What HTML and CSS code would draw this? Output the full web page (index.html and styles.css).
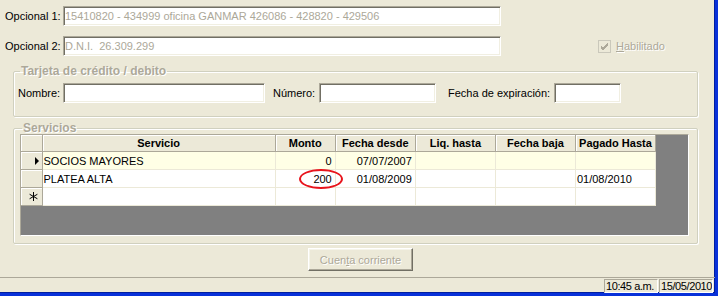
FILE: index.html
```html
<!DOCTYPE html>
<html lang="es">
<head>
    <meta charset="UTF-8">
    <title>Socio - Servicios</title>
    <link rel="stylesheet" href="styles.css">
</head>
<body>

<div class="window">
    <div class="client">

        <div class="field-row row-op1">
            <label class="lbl lbl-op" for="op1">Opcional 1:</label>
            <input type="text" id="op1" class="textbox tb-op" value="15410820 - 434999 oficina GANMAR 426086 - 428820 - 429506" readonly>
        </div>

        <div class="field-row row-op2">
            <label class="lbl lbl-op" for="op2">Opcional 2:</label>
            <input type="text" id="op2" class="textbox tb-op" value="D.N.I.  26.309.299" readonly>
            <div class="check">
                <span class="check-box">
                    <svg width="11" height="11" viewBox="0 0 11 11"><path d="M2 5 L4 7 L9 2 M2 6 L4 8 L9 3 M2 7 L4 9 L9 4" stroke="#aca899" stroke-width="1" fill="none"/></svg>
                </span>
                <span class="check-label"><u>H</u>abilitado</span>
            </div>
        </div>

        <fieldset class="group group-card">
            <legend>Tarjeta de crédito / debito</legend>
            <div class="field-row">
                <label class="lbl lbl-nombre" for="nombre">Nombre:</label>
                <input type="text" id="nombre" class="textbox tb-nombre">
                <label class="lbl lbl-numero" for="numero">Número:</label>
                <input type="text" id="numero" class="textbox tb-numero">
                <label class="lbl lbl-fecha" for="fecha">Fecha de expiración:</label>
                <input type="text" id="fecha" class="textbox tb-fecha">
            </div>
        </fieldset>

        <fieldset class="group group-serv">
            <legend>Servicios</legend>
            <div class="grid-area">
                <table class="grid">
                    <colgroup>
                        <col style="width: 21px">
                        <col style="width: 233px">
                        <col style="width: 60px">
                        <col style="width: 80px">
                        <col style="width: 80px">
                        <col style="width: 80px">
                        <col style="width: 80px">
                    </colgroup>
                    <thead>
                        <tr>
                            <th class="rowhead"></th>
                            <th>Servicio</th>
                            <th>Monto</th>
                            <th>Fecha desde</th>
                            <th>Liq. hasta</th>
                            <th>Fecha baja</th>
                            <th>Pagado Hasta</th>
                        </tr>
                    </thead>
                    <tbody>
                        <tr class="current">
                            <td class="rowhead">
                                <svg width="8" height="10" viewBox="0 0 8 10"><path d="M3 1 L7 5 L3 9 Z" fill="#000"/></svg>
                            </td>
                            <td>SOCIOS MAYORES</td>
                            <td class="num">0</td>
                            <td class="num">07/07/2007</td>
                            <td></td>
                            <td></td>
                            <td></td>
                        </tr>
                        <tr>
                            <td class="rowhead"></td>
                            <td>PLATEA ALTA</td>
                            <td class="num marked">200<span class="circle"></span></td>
                            <td class="num">01/08/2009</td>
                            <td></td>
                            <td></td>
                            <td>01/08/2010</td>
                        </tr>
                        <tr class="newrow">
                            <td class="rowhead">
                                <svg width="9" height="9" viewBox="0 0 9 9"><path d="M4.5 0 V9 M0.6 2.25 L8.4 6.75 M0.6 6.75 L8.4 2.25" stroke="#000" stroke-width="1" fill="none"/></svg>
                            </td>
                            <td></td>
                            <td></td>
                            <td></td>
                            <td></td>
                            <td></td>
                            <td></td>
                        </tr>
                    </tbody>
                </table>
            </div>
        </fieldset>

        <div class="button-row">
            <button class="button" disabled>Cuen<u>t</u>a corriente</button>
        </div>

        <div class="statusbar">
            <div class="panel panel-fill"></div>
            <div class="panel panel-time">10:45 a.m.</div>
            <div class="panel panel-date">15/05/2010</div>
        </div>

    </div>
</div>

</body>
</html>
```

FILE: styles.css
```css
body {
    margin: 0;
    padding: 0;
    background-color: #ece9d8;
    font-family: "Liberation Sans", Arial, sans-serif;
    font-size: 11px;
    color: #000;
}
.window {
    width: 718px;
    height: 296px;
    box-sizing: border-box;
    border-right: 3px solid #0831d9;
    border-bottom: 3px solid #0831d9;
    box-shadow: inset -1px -1px 0 #001ea0;
    background-color: #ece9d8;
    overflow: hidden;
}
.client {
    display: flex;
    flex-direction: column;
    height: 293px;
}
.field-row {
    display: flex;
    align-items: center;
}
.row-op1 {
    margin-top: 6px;
}
.row-op2 {
    margin-top: 10px;
}
.lbl {
    white-space: nowrap;
}
.lbl-op {
    width: 58px;
    padding-left: 5px;
}
.textbox {
    box-sizing: border-box;
    height: 20px;
    margin: 0;
    padding: 0 1px;
    font-family: "Liberation Sans", Arial, sans-serif;
    font-size: 11px;
    color: #000;
    background-color: #fff;
    border: 1px solid;
    border-color: #aca899 #fff #fff #aca899;
    box-shadow: inset 1px 1px 0 #716f64, inset -1px -1px 0 #f1efe2;
    outline: none;
}
.tb-op {
    width: 438px;
    color: #aca899;
}
.check {
    display: flex;
    align-items: center;
    margin-left: 97px;
    color: #aca899;
}
.check-box {
    box-sizing: border-box;
    width: 13px;
    height: 13px;
    border: 1px solid #cac8bb;
    background-color: #ece9d8;
    display: flex;
    align-items: center;
    justify-content: center;
}
.check-label {
    margin-left: 5px;
    text-shadow: 1px 1px 0 #fff;
}
.group {
    margin: 0 0 0 13px;
    width: 685px;
    box-sizing: border-box;
    border: 1px solid #d0d0bf;
    box-shadow: 1px 1px 0 #fff, inset 1px 1px 0 #fff;
    border-radius: 2px;
}
.group legend {
    margin-left: 2px;
    padding: 0 1px;
    font-size: 12px;
    font-weight: bold;
    line-height: 12px;
    color: #aca899;
    text-shadow: 1px 1px 0 #fff;
}
.group-card {
    margin-top: 9px;
    padding: 6px 0 13px 4px;
}
.lbl-nombre {
    width: 45px;
}
.tb-nombre {
    width: 202px;
}
.lbl-numero {
    margin-left: 8px;
    width: 46px;
}
.tb-numero {
    width: 117px;
}
.lbl-fecha {
    margin-left: 12px;
    width: 106px;
}
.tb-fecha {
    width: 67px;
}
.group-serv {
    margin-top: 5px;
    padding: 0 0 7px 6px;
}
.grid-area {
    width: 669px;
    height: 102px;
    box-sizing: border-box;
    background-color: #808080;
    border: 1px solid;
    border-color: #aca899 #fff #fff #aca899;
}
.grid {
    border-collapse: collapse;
    table-layout: fixed;
    width: 635px;
    border-right: 1px solid #000;
    border-bottom: 1px solid #000;
}
.grid th {
    height: 16px;
    padding: 0;
    background-color: #ece9d8;
    font-weight: bold;
    text-align: center;
    border-right: 1px solid #aca899;
    border-bottom: 1px solid #aca899;
    box-shadow: inset 1px 1px 0 #fff;
    white-space: nowrap;
    overflow: hidden;
}
.grid td {
    height: 17px;
    padding: 0 1px;
    background-color: #fff;
    border-right: 1px solid #ece9d8;
    border-bottom: 1px solid #ece9d8;
    white-space: nowrap;
}
.grid tr.current td {
    background-color: #ffffe6;
}
.grid td.rowhead,
.grid tr.current td.rowhead {
    background-color: #ece9d8;
    border-right: 1px solid #aca899;
    border-bottom: 1px solid #aca899;
    box-shadow: inset 1px 1px 0 #fff;
    text-align: right;
    padding: 0 2px 0 0;
    line-height: 0;
}
.grid tr.newrow td.rowhead {
    text-align: center;
    padding: 0 0 0 4px;
}
.grid td.num {
    text-align: right;
    padding-right: 3px;
}
.grid td.marked {
    position: relative;
}
.circle {
    position: absolute;
    left: 23px;
    top: -1px;
    width: 44px;
    height: 20px;
    box-sizing: border-box;
    border: 2px solid #e8141c;
    border-radius: 50%;
}
.button-row {
    display: flex;
    padding: 4px 0 0 308px;
}
.button {
    box-sizing: border-box;
    width: 105px;
    height: 23px;
    padding: 0;
    font-family: "Liberation Sans", Arial, sans-serif;
    font-size: 11px;
    color: #aca899;
    text-shadow: 1px 1px 0 #fff;
    background-color: #ece9d8;
    border: 1px solid;
    border-color: #fff #716f64 #716f64 #fff;
    box-shadow: inset -1px -1px 0 #aca899, inset 1px 1px 0 #f5f4ea;
}
.statusbar {
    display: flex;
    margin-top: auto;
    height: 15px;
    border-top: 1px solid #aca899;
}
.panel {
    box-sizing: border-box;
    height: 14px;
    margin-top: 1px;
    line-height: 12px;
    padding: 0 1px;
    border: 1px solid;
    border-color: #aca899 #fff #fff #aca899;
    white-space: nowrap;
    letter-spacing: -0.4px;
    overflow: hidden;
}
.panel-fill {
    flex: 1;
    border: none;
}
.panel-time {
    width: 54px;
}
.panel-date {
    width: 54px;
    margin-left: 1px;
    margin-right: 2px;
}
```
